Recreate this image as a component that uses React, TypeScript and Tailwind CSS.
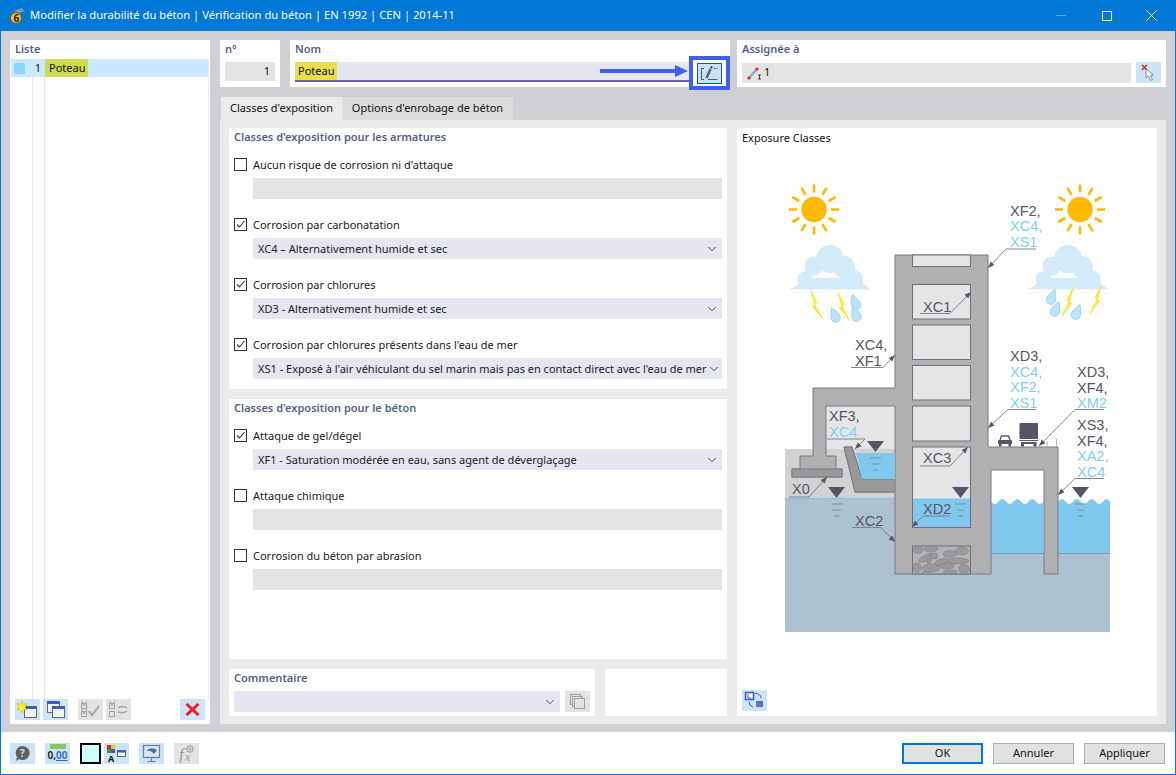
import React from 'react'
import { ChevronDown } from 'lucide-react'

const IconBtn = ({ off, children }: { off?: boolean; children: React.ReactNode }) => (
  <div className={`flex h-[21px] w-[25px] shrink-0 items-center justify-center ${off ? 'bg-[#e3e3e3]' : 'bg-[#cce4f7]'}`}>
    {children}
  </div>
)

const Check = ({ on, label }: { on?: boolean; label: string }) => (
  <div className="flex h-[13px] items-center text-[11px] leading-[13px] text-[#1a1a1a]">
    <div className="mr-[6px] flex h-[13px] w-[13px] shrink-0 items-center justify-center border border-[#333333] bg-white">
      {on && (
        <svg width="11" height="11" viewBox="0 0 11 11">
          <path d="M2 5.5 L4.5 8 L9.5 2" fill="none" stroke="#333333" strokeWidth="1.1" />
        </svg>
      )}
    </div>
    {label}
  </div>
)

const Option = ({ on, label, value }: { on?: boolean; label: string; value?: string }) => (
  <div className="flex flex-col gap-[7px]">
    <Check on={on} label={label} />
    {value ? (
      <div className="ml-[19px] flex h-[21px] items-center justify-between bg-[#e6e6f0] pl-[5px] pr-[3px] text-[11px] text-[#1a1a1a]">
        <span className="whitespace-nowrap pt-px">{value}</span>
        <ChevronDown size={14} strokeWidth={1.5} className="shrink-0 text-[#333344]" />
      </div>
    ) : (
      <div className="ml-[19px] h-[21px] bg-[#e3e3e3]" />
    )}
  </div>
)

const Heading = ({ children, className = '' }: { children: React.ReactNode; className?: string }) => (
  <div className={`text-[11px] font-semibold leading-[14px] text-[#54608a] ${className}`}>{children}</div>
)

const Sun = ({ cx }: { cx: number }) => {
  const rays = [0, 30, 60, 90, 120, 150, 180, 210, 240, 270, 300, 330]
  return (
    <g>
      <circle cx={cx} cy={209.5} r={12.7} fill="#ffb900" />
      {rays.map((a) => (
        <line
          key={a}
          x1={cx}
          y1={209.5 - 17}
          x2={cx}
          y2={209.5 - 25}
          stroke="#ffb900"
          strokeWidth="2.6"
          transform={`rotate(${a} ${cx} 209.5)`}
        />
      ))}
    </g>
  )
}

const Cloud = ({ x }: { x: number }) => (
  <g transform={`translate(${x} 0)`} fill="#d3eaf8">
    <circle cx="40" cy="259" r="14" />
    <circle cx="24" cy="266" r="9.5" />
    <circle cx="15" cy="279" r="7.5" />
    <circle cx="54" cy="267" r="11" />
    <circle cx="64" cy="279" r="9" />
    <path d="M0 289 Q8 286 14 278 H68 Q74 285 80 289 Q80 289.5 78 289.5 H2 Q0 289.5 0 289 Z" />
  </g>
)

const Bolt = ({ x, y, flip }: { x: number; y: number; flip?: boolean }) => (
  <path
    transform={`translate(${x} ${y}) scale(${flip ? -1 : 1} 1)`}
    d="M0 0 L6 12 L3.5 13 L11.5 28 L1.5 15 L4 14 Z"
    fill="#ffee22"
    stroke="#f6e21a"
    strokeWidth="0.8"
  />
)

const Drop = ({ x, y, flip }: { x: number; y: number; flip?: boolean }) => (
  <path
    transform={`translate(${x} ${y}) rotate(${flip ? 22 : -22})`}
    d="M0 -8 Q5.5 1 4.5 4 A4.6 4.6 0 0 1 -4.5 4 Q-5.5 1 0 -8 Z"
    fill="#bfe3f6"
    stroke="#6cc0ea"
    strokeWidth="0.5"
  />
)

const Level = ({ x, y }: { x: number; y: number }) => (
  <g>
    <path d={`M${x} ${y} h17 l-8.5 11 Z`} fill="#555566" />
    <path
      d={`M${x + 3} ${y + 17} h11 M${x + 4.5} ${y + 23} h8 M${x + 6} ${y + 29} h5`}
      stroke="#7d8b96"
      strokeWidth="1"
      fill="none"
    />
  </g>
)

// label lines: text, colour, then the leader under the last line
const Tag = ({ x, y, lines }: { x: number; y: number; lines: [string, boolean?][] }) => (
  <g fontFamily="Liberation Sans, Arial, sans-serif" fontSize="14.5">
    {lines.map(([t, blue], i) => (
      <text key={t + i} x={x} y={y + i * 15.7} fill={blue ? '#82cdf2' : '#555566'}>
        {t}
      </text>
    ))}
  </g>
)

const Lead = ({ pts }: { pts: number[] }) => {
  const [x0, y0, x1, y1, x2, y2] = pts
  const a = Math.atan2(y2 - y1, x2 - x1)
  const len = 7
  const w = 0.38
  const ax = x2 - len * Math.cos(a - w)
  const ay = y2 - len * Math.sin(a - w)
  const bx = x2 - len * Math.cos(a + w)
  const by = y2 - len * Math.sin(a + w)
  return (
    <g>
      <path d={`M${x0} ${y0} L${x1} ${y1} L${x2} ${y2}`} fill="none" stroke="#777785" strokeWidth="0.9" />
      <path d={`M${x2} ${y2} L${ax} ${ay} L${bx} ${by} Z`} fill="#555566" />
    </g>
  )
}

const Diagram = () => (
  <svg width="400" height="470" viewBox="760 170 400 470" className="block">
    <Sun cx={814} />
    <Sun cx={1080} />
    <Cloud x={790} />
    <Cloud x={1028} />
    <Bolt x={811} y={291} />
    <Bolt x={838} y={292.5} />
    <Bolt x={1073} y={288.5} flip />
    <Bolt x={1101} y={286} flip />
    <Drop x={834.5} y={315} />
    <Drop x={855} y={302} />
    <Drop x={855.5} y={314} />
    <Drop x={1052} y={297} flip />
    <Drop x={1056} y={309} flip />
    <Drop x={1077} y={312} flip />

    {/* ground and water */}
    <rect x="785" y="449" width="110" height="50" fill="#d2d2d2" />
    <rect x="826" y="406" width="69" height="43" fill="#e5e5e5" />
    <path d="M785 498 H991 V553 H1110 V632 H785 Z" fill="#acc3cf" />
    <line x1="785" y1="498.5" x2="895" y2="498.5" stroke="#82c4e4" />
    <path
      d="M991 501.5 q3.75 5 7.5 0 t7.5 0 t7.5 0 t7.5 0 t7.5 0 t7.5 0 t7.5 0 V553 H991 Z"
      fill="#80c9ee"
    />
    <path d="M1058 501.5 q3.75 -5 7.5 0 t7.5 0 t7.5 0 t7.5 0 t7.5 0 t7.5 0 t7 0 V553 H1058 Z" fill="#80c9ee" />
    <path d="M991 553.5 H1110" stroke="#6d8ea3" strokeWidth="0.8" />

    {/* building */}
    <path
      d="M895 255 H988 V447 H1058 V574 H1044 V470 H991 V574 H895 V492 H855 L844 447 H852 L862 479 H895 V406 H826 V456 H836 V469 H842 V477 H792 V469 H800 V456 H813 V388 H895 Z"
      fill="#b0b0b0"
      stroke="#7a7888"
      strokeWidth="1"
    />
    <path d="M855 492 L844 447 H852 L862 479 H895 V492 Z" fill="#999999" stroke="#7a7888" />
    <rect x="792" y="469" width="50" height="8" fill="#999999" stroke="#7a7888" />
    <path d="M856 453 H895 V479 H862 Z" fill="#80c9ee" />
    <rect x="912.5" y="255" width="58" height="11.5" fill="#e5e5e5" stroke="#6f6d7e" />
    <rect x="912.5" y="284.5" width="58" height="34.5" fill="#e5e5e5" stroke="#6f6d7e" />
    <rect x="912.5" y="325" width="58" height="34.5" fill="#e5e5e5" stroke="#6f6d7e" />
    <rect x="912.5" y="365.5" width="58" height="34.5" fill="#e5e5e5" stroke="#6f6d7e" />
    <rect x="912.5" y="406" width="58" height="35" fill="#e5e5e5" stroke="#6f6d7e" />
    <rect x="912.5" y="447" width="58" height="80.5" fill="#e5e5e5" stroke="#6f6d7e" />
    <rect x="913" y="498.5" width="57" height="28.5" fill="#80c9ee" />

    {/* gravel */}
    <rect x="912.5" y="546" width="58" height="28" fill="#b5b5b5" stroke="#6f6d7e" />
    <g fill="#999999" stroke="#77778a" strokeWidth="0.5">
      <ellipse cx="918" cy="550" rx="5" ry="3.5" />
      <ellipse cx="931" cy="549" rx="7" ry="3" />
      <ellipse cx="950" cy="554" rx="7" ry="3.5" />
      <ellipse cx="962" cy="551" rx="6.5" ry="4" />
      <ellipse cx="926" cy="558" rx="8" ry="3" transform="rotate(-25 926 558)" />
      <ellipse cx="934" cy="556" rx="4" ry="3" />
      <ellipse cx="958" cy="561" rx="11" ry="3" />
      <ellipse cx="941" cy="562" rx="7" ry="3" transform="rotate(-20 941 562)" />
      <ellipse cx="917" cy="568" rx="4" ry="5" />
      <ellipse cx="931" cy="568" rx="9" ry="4" />
      <ellipse cx="947" cy="566" rx="7" ry="3" />
      <ellipse cx="964" cy="569" rx="5.5" ry="4.5" />
      <ellipse cx="950" cy="572" rx="7" ry="2" />
      <ellipse cx="926" cy="573" rx="4" ry="1.5" />
      <circle cx="929" cy="561" r="2.5" />
    </g>

    {/* vehicles */}
    <path d="M1000 440 l1.5 -4 h7 l1.5 4" fill="none" stroke="#555566" strokeWidth="1.3" />
    <path d="M998 441 q0 -1 1 -1 h12 q1 0 1 1 v3 h-14 Z" fill="#555566" />
    <path d="M999 444 h2.5 v2.5 h-2.5 Z M1008.5 444 h2.5 v2.5 h-2.5 Z" fill="#555566" />
    <rect x="1019.5" y="423" width="18.5" height="16" rx="1" fill="#555566" />
    <path d="M1019.5 440.5 h18.5" stroke="#555566" strokeWidth="1" />
    <path d="M1021 442 h15.5 v2 h-15.5 Z M1021 444 h3 v2.5 h-3 Z M1033.5 444 h3 v2.5 h-3 Z" fill="#555566" />
    <path d="M1047 446 v-5 M1056.5 446 v-7" stroke="#9a9aa5" strokeWidth="0.8" />

    <Level x={867} y={441} />
    <Level x={828} y={487} />
    <Level x={952} y={487} />
    <Level x={1072} y={487} />

    <Tag x={1010} y={215.5} lines={[['XF2,'], ['XC4,', true], ['XS1', true]]} />
    <Lead pts={[1036, 249, 1006, 249, 988, 268]} />
    <Tag x={923} y={312} lines={[['XC1']]} />
    <Lead pts={[920, 313.5, 950, 313.5, 971, 292]} />
    <Tag x={855} y={350} lines={[['XC4,'], ['XF1']]} />
    <Lead pts={[851, 367.5, 883, 367.5, 895, 355]} />
    <Tag x={1010} y={361} lines={[['XD3,'], ['XC4,', true], ['XF2,', true], ['XS1', true]]} />
    <Lead pts={[1036, 409.5, 1008, 409.5, 988, 428]} />
    <Tag x={1077} y={377} lines={[['XD3,'], ['XF4,'], ['XM2', true]]} />
    <Lead pts={[1104, 409.5, 1075, 409.5, 1039, 446]} />
    <Tag x={1077} y={430} lines={[['XS3,'], ['XF4,'], ['XA2,', true], ['XC4', true]]} />
    <Lead pts={[1104, 478.5, 1075, 478.5, 1058, 495]} />
    <Tag x={829} y={421} lines={[['XF3,'], ['XC4', true]]} />
    <Lead pts={[827, 439, 865, 439, 855, 449]} />
    <Tag x={792} y={494} lines={[['X0']]} />
    <Lead pts={[789, 497, 809, 497, 827, 477]} />
    <Tag x={855} y={526} lines={[['XC2']]} />
    <Lead pts={[852, 527.5, 881, 527.5, 895, 542]} />
    <Tag x={923} y={463} lines={[['XC3']]} />
    <Lead pts={[920, 466, 950, 466, 968, 447]} />
    <Tag x={923} y={514} lines={[['XD2']]} />
    <Lead pts={[950, 516, 923, 516, 912, 527]} />
  </svg>
)

const WinIcon = ({ x, y }: { x: number; y: number }) => (
  <g>
    <rect x={x} y={y} width="12" height="11" fill="#f2f2f2" stroke="#666666" />
    <rect x={x} y={y} width="12" height="2.5" fill="#3557d8" />
  </g>
)

export default function App() {
  return (
    <div
      className="flex h-[775px] w-[1176px] flex-col overflow-hidden border-x border-b border-[#0078d7] bg-white"
      style={{ fontFamily: '"Noto Sans", "Open Sans", sans-serif' }}
    >
      <header className="-mx-px flex h-[31px] shrink-0 items-center bg-[#0078d7] pl-[9px] text-white">
        <svg width="16" height="18" viewBox="0 0 16 18" className="mr-[5px]">
          <path d="M5 4 L13 1 L15 4 L8 8 Z" fill="#8b95a8" />
          <circle cx="7" cy="11" r="5.5" fill="#f1c232" stroke="#6b5a10" />
          <text x="4.6" y="14.5" fontSize="10" fontWeight="700" fill="#222222">6</text>
        </svg>
        <span className="whitespace-nowrap text-[11.2px]">
          Modifier la durabilité du béton | Vérification du béton | EN 1992 | CEN | 2014-11
        </span>
        <div className="ml-auto flex items-center">
          <div className="flex w-[50px] justify-center">
            <div className="h-px w-[10px] bg-[#5aa8e6]" />
          </div>
          <div className="flex w-[41px] justify-center">
            <div className="h-[10px] w-[10px] border border-white" />
          </div>
          <div className="flex w-[49px] justify-center">
            <svg width="11" height="11" viewBox="0 0 11 11">
              <path d="M0.5 0.5 L10.5 10.5 M10.5 0.5 L0.5 10.5" stroke="white" strokeWidth="1" />
            </svg>
          </div>
        </div>
      </header>

      <main className="flex h-[701px] shrink-0 gap-[10px] bg-[#d0cfd4] pb-2 pl-[9px] pt-[9px]">
        <aside className="flex w-[200px] flex-col bg-white">
          <div className="flex h-[19px] items-center px-[5px] text-[11px] font-semibold text-[#54608a]">Liste</div>
          <div className="relative flex-1 px-px">
            <div className="absolute bottom-0 left-[22px] top-0 w-px bg-[#e8e8e8]" />
            <div className="absolute bottom-0 left-[34px] top-0 w-px bg-[#e8e8e8]" />
            <div className="absolute bottom-0 right-[1px] top-0 w-px bg-[#e8e8e8]" />
            <div className="relative flex h-[18px] w-[197px] items-center bg-[#cce8ff] text-[11px] text-[#111111]">
              <div className="ml-[3px] h-[11px] w-[11px] bg-[#8ed6f8]" />
              <span className="w-[16px] text-right">1</span>
              <span className="ml-[4px] flex h-[18px] w-[43px] items-center bg-[#cddc52] pl-[4px]">Poteau</span>
            </div>
          </div>
          <div className="flex h-[25px] items-start px-[5px]">
            <IconBtn>
              <svg width="21" height="19" viewBox="0 0 21 19">
                <WinIcon x={7.5} y={6.5} />
                <path d="M5 1 L6.5 4.5 L10 3.5 L8 7 L10 10 L6.5 9.5 L5 13 L3.5 9.5 L0 10 L2 7 L0 3.5 L3.5 4.5 Z" fill="#ffee22" stroke="#c9a800" strokeWidth="0.5" />
              </svg>
            </IconBtn>
            <div className="ml-[3px]">
              <IconBtn>
                <svg width="21" height="19" viewBox="0 0 21 19">
                  <WinIcon x={2.5} y={1.5} />
                  <WinIcon x={7.5} y={6.5} />
                </svg>
              </IconBtn>
            </div>
            <div className="ml-[10px]">
              <IconBtn off>
                <svg width="21" height="19" viewBox="0 0 21 19" fill="none" stroke="#a5a5a5">
                  <rect x="1.5" y="3.5" width="5" height="5" />
                  <rect x="1.5" y="11.5" width="5" height="5" />
                  <path d="M2 1 L4 6 L7 1 M2 9 L4 14 L7 9" strokeWidth="1" />
                  <path d="M9 11 L12 15 L19 6" strokeWidth="2" />
                </svg>
              </IconBtn>
            </div>
            <div className="ml-[3px]">
              <IconBtn off>
                <svg width="21" height="19" viewBox="0 0 21 19" fill="none" stroke="#a5a5a5">
                  <rect x="1.5" y="3.5" width="5" height="5" />
                  <rect x="1.5" y="11.5" width="5" height="5" />
                  <path d="M2 1 L4 6 L7 1" strokeWidth="1" />
                  <path d="M10 8 Q14 5 19 8 M10 12 Q15 14 19 11" strokeWidth="1.4" />
                </svg>
              </IconBtn>
            </div>
            <div className="ml-[49px]">
              <IconBtn>
                <svg width="15" height="13" viewBox="0 0 15 13">
                  <path d="M1.5 1 L13.5 12 M13.5 1 L1.5 12" stroke="#ee1c25" strokeWidth="3" />
                </svg>
              </IconBtn>
            </div>
          </div>
        </aside>

        <section className="flex w-[946px] flex-col">
          <div className="relative flex h-[47px] shrink-0">
            <div className="flex w-[60px] flex-col bg-white px-[5px]">
              <div className="mt-[2px] text-[11px] font-semibold leading-[13px] text-[#54608a]">n°</div>
              <div className="mt-[7px] flex h-[19px] items-center justify-end bg-[#e3e3e3] px-[5px] text-[11px] text-[#111111]">1</div>
            </div>
            <div className="ml-[10px] flex w-[440px] flex-col bg-white pl-[5px]">
              <div className="mt-[2px] text-[11px] font-semibold leading-[13px] text-[#54608a]">Nom</div>
              <div className="mt-[7px] flex h-[20px] w-[395px] items-stretch border-b-2 border-[#6464a8] bg-[#e6e6f0] text-[11px] text-[#111111]">
                <span className="flex items-center bg-[#e8de50] pl-[3px] pr-[3px] pt-px">Poteau</span>
              </div>
            </div>
            <div className="ml-[7px] flex w-[429px] flex-col bg-white px-[5px]">
              <div className="mt-[2px] text-[11px] font-semibold leading-[13px] text-[#54608a]">Assignée à</div>
              <div className="mt-[7px] flex items-center gap-[5px]">
                <div className="flex h-[20px] flex-1 items-center bg-[#e3e3e3] pl-[5px] text-[11px] text-[#111111]">
                  <svg width="16" height="14" viewBox="0 0 16 14" className="mr-[1px]">
                    <path d="M2 12 L10 3" stroke="#8aa5d8" strokeWidth="2.4" />
                    <circle cx="2" cy="12" r="1.6" fill="#e0202a" />
                    <circle cx="10" cy="3" r="1.6" fill="#e0202a" />
                    <path d="M11 9 h3 M12.5 9 v4 M11 13 h3" stroke="#333333" strokeWidth="0.9" />
                  </svg>
                  1
                </div>
                <IconBtn>
                  <svg width="19" height="19" viewBox="0 0 19 19">
                    <path d="M3 2 L8 7 M8 2 L3 7" stroke="#e0202a" strokeWidth="1.6" />
                    <path d="M7 6 L7 15 L9.5 13 L11.5 17.5 L13.5 16.5 L11.5 12.5 L14.5 12 Z" fill="#f4f4f4" stroke="#777777" strokeWidth="0.8" />
                  </svg>
                </IconBtn>
              </div>
            </div>

            {/* blue call-out over the Nom field */}
            <svg width="90" height="14" viewBox="0 0 90 14" className="absolute left-[380px] top-[24px]">
              <path d="M0 7 H77" stroke="#3f5ff0" strokeWidth="4" strokeLinecap="round" />
              <path d="M75 1 L88 7 L75 13 Z" fill="#3f5ff0" />
            </svg>
            <div className="absolute left-[469px] top-[16px] flex h-[34px] w-[41px] items-center justify-center border-4 border-[#3f5ff0] bg-white">
              <div className="flex h-[21px] w-[25px] items-center justify-center border border-[#0f5a96] bg-[#c8e2f8]">
                <svg width="21" height="17" viewBox="0 0 21 17" fill="none">
                  <path d="M5 3.5 H2.5 V14.5 H5 M9 14.5 H18.5" stroke="#555555" strokeWidth="1" />
                  <path d="M7.5 13 L11.5 4" stroke="#666666" strokeWidth="2.6" />
                  <path d="M12 3.2 L12.8 1.5" stroke="#333333" strokeWidth="2" />
                  <path d="M15 3.5 H18.5" stroke="#555555" strokeWidth="1" strokeDasharray="1.5 1" />
                </svg>
              </div>
            </div>
          </div>

          <div className="mt-[10px] flex h-[23px] shrink-0 pl-px text-[11px] text-[#111111]">
            <div className="flex w-[121px] items-center justify-center bg-[#ebebeb]">Classes d'exposition</div>
            <div className="flex w-[171px] items-center justify-center bg-[#dcdcdc]">Options d'enrobage de béton</div>
          </div>

          <div className="flex h-[604px] shrink-0 gap-[10px] bg-[#ebebeb] px-[9px] py-2">
            <div className="flex w-[498px] flex-col gap-[10px]">
              <div className="flex h-[261px] flex-col bg-white px-[5px]">
                <Heading className="mt-px h-[29px] pt-px">Classes d'exposition pour les armatures</Heading>
                <div className="flex flex-col gap-[19px]">
                  <Option label="Aucun risque de corrosion ni d'attaque" />
                  <Option on label="Corrosion par carbonatation" value="XC4 – Alternativement humide et sec" />
                  <Option on label="Corrosion par chlorures" value="XD3 - Alternativement humide et sec" />
                  <Option
                    on
                    label="Corrosion par chlorures présents dans l'eau de mer"
                    value="XS1 - Exposé à l'air véhiculant du sel marin mais pas en contact direct avec l'eau de mer"
                  />
                </div>
              </div>
              <div className="flex h-[260px] flex-col bg-white px-[5px]">
                <Heading className="mt-px h-[29px] pt-px">Classes d'exposition pour le béton</Heading>
                <div className="flex flex-col gap-[19px]">
                  <Option on label="Attaque de gel/dégel" value="XF1 - Saturation modérée en eau, sans agent de déverglaçage" />
                  <Option label="Attaque chimique" />
                  <Option label="Corrosion du béton par abrasion" />
                </div>
              </div>
              <div className="flex h-[47px] gap-[10px]">
                <div className="flex w-[366px] flex-col bg-white px-[5px]">
                  <Heading className="mt-[2px]">Commentaire</Heading>
                  <div className="mt-[6px] flex items-center gap-[5px]">
                    <div className="flex h-[21px] flex-1 items-center justify-end bg-[#e6e6f0] pr-[3px]">
                      <ChevronDown size={14} strokeWidth={1.5} className="text-[#333344]" />
                    </div>
                    <IconBtn off>
                      <svg width="17" height="17" viewBox="0 0 17 17" fill="#e3e3e3" stroke="#a0a0a0">
                        <rect x="1.5" y="1.5" width="10" height="10" />
                        <rect x="3.5" y="3.5" width="10" height="10" />
                        <rect x="5.5" y="5.5" width="10" height="10" />
                      </svg>
                    </IconBtn>
                  </div>
                </div>
                <div className="w-[122px] bg-white" />
              </div>
            </div>

            <div className="flex w-[420px] flex-col bg-white">
              <div className="flex h-[20px] shrink-0 items-center px-[5px] text-[11px] text-[#111111]">Exposure Classes</div>
              <div className="mt-[22px] flex-1 overflow-hidden pl-[23px]">
                <Diagram />
              </div>
              <div className="mb-[5px] ml-[5px]">
                <IconBtn>
                  <svg width="21" height="19" viewBox="0 0 21 19">
                    <rect x="1.5" y="1.5" width="8" height="7" fill="#ffffff" stroke="#3557d8" strokeWidth="1.6" />
                    <path d="M4 3 v4 h3" stroke="#3557d8" fill="none" />
                    <path d="M11 2 Q17 3 17 7 M5 11 Q5 15 9 16" stroke="#555555" fill="none" />
                    <rect x="12" y="10" width="7" height="6" fill="#5578b0" />
                  </svg>
                </IconBtn>
              </div>
            </div>
          </div>
        </section>
      </main>

      <footer className="flex flex-1 items-center pl-[9px] pr-[10px]">
        <IconBtn>
          <svg width="17" height="17" viewBox="0 0 17 17">
            <path d="M8.5 1 A7 7 0 1 1 5 14 L2 16 L3 12 A7 7 0 0 1 8.5 1 Z" fill="#5f5f5f" />
            <text x="6" y="12" fontSize="10" fontWeight="700" fill="#cce4f7">?</text>
          </svg>
        </IconBtn>
        <div className="ml-[10px]">
          <IconBtn>
            <div className="flex flex-col items-center">
              <div className="h-[5px] w-[16px] bg-[#8cc462]" />
              <span className="text-[10px] font-semibold leading-[13px] text-[#111111]">
                0,<span className="text-[#2f63d8] underline">00</span>
              </span>
            </div>
          </IconBtn>
        </div>
        <div className="ml-[10px] h-[21px] w-[21px] border-2 border-black bg-[#ccffff]" />
        <div className="ml-[3px]">
          <IconBtn>
            <svg width="21" height="19" viewBox="0 0 21 19">
              <rect x="1" y="1" width="4" height="4" fill="#e0202a" />
              <rect x="5" y="1" width="4" height="4" fill="#e8d020" />
              <rect x="1" y="5" width="4" height="4" fill="#30a030" />
              <rect x="5" y="5" width="4" height="4" fill="#3557d8" />
              <rect x="11.5" y="6.5" width="8" height="6" fill="#f4f4f4" stroke="#666666" />
              <rect x="11.5" y="6.5" width="8" height="2" fill="#3557d8" />
              <text x="2" y="17.5" fontSize="9" fontWeight="700" fill="#111111">A</text>
            </svg>
          </IconBtn>
        </div>
        <div className="ml-[10px]">
          <IconBtn>
            <svg width="21" height="19" viewBox="0 0 21 19">
              <rect x="2.5" y="1.5" width="16" height="12" fill="#dce6f2" stroke="#6c7f99" strokeWidth="1.2" />
              <path d="M5 7 Q10 2 16 6 L13 10 Q10 6 5 7 Z" fill="#3f6fa8" />
              <path d="M10.5 14 v3 M6.5 17.5 h8" stroke="#6c7f99" strokeWidth="1.2" />
            </svg>
          </IconBtn>
        </div>
        <div className="ml-[10px]">
          <IconBtn off>
            <svg width="21" height="19" viewBox="0 0 21 19" fontFamily="Liberation Serif, serif" fontStyle="italic" fill="#9a9a9a">
              <text x="3" y="16" fontSize="17">f</text>
              <text x="9" y="17" fontSize="12">x</text>
              <circle cx="14" cy="5" r="3.2" fill="none" stroke="#9a9a9a" />
              <path d="M10.8 5 H17.2 M14 1.8 V8.2" stroke="#9a9a9a" strokeWidth="0.7" />
            </svg>
          </IconBtn>
        </div>

        <div className="ml-auto flex gap-[10px] text-[11px] text-[#111111]">
          <button className="flex h-[21px] w-[81px] items-center justify-center border-2 border-[#0078d7] bg-[#e1e1e1]">OK</button>
          <button className="flex h-[21px] w-[81px] items-center justify-center border border-[#adadad] bg-[#e1e1e1]">Annuler</button>
          <button className="flex h-[21px] w-[81px] items-center justify-center border border-[#adadad] bg-[#e1e1e1]">Appliquer</button>
        </div>
      </footer>
    </div>
  )
}
